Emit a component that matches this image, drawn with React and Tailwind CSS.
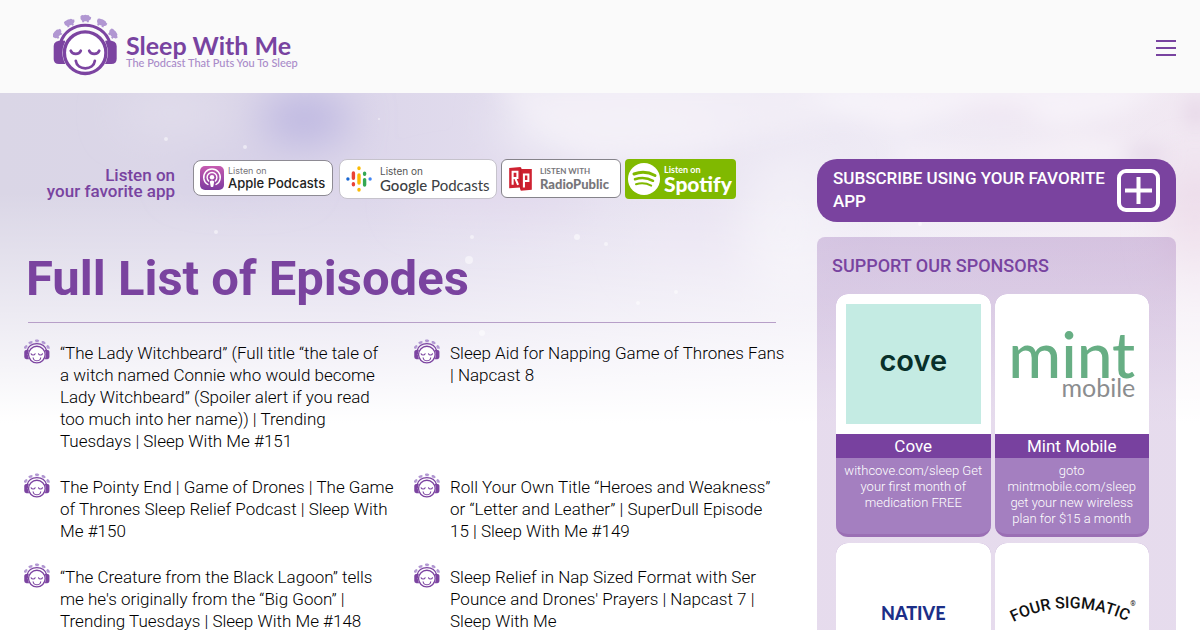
const episodes = [
  '“The Lady Witchbeard” (Full title “the tale of\na witch named Connie who would become\nLady Witchbeard” (Spoiler alert if you read\ntoo much into her name)) | Trending\nTuesdays | Sleep With Me #151',
  'Sleep Aid for Napping Game of Thrones Fans\n| Napcast 8',
  'The Pointy End | Game of Drones | The Game\nof Thrones Sleep Relief Podcast | Sleep With\nMe #150',
  'Roll Your Own Title “Heroes and Weakness”\nor “Letter and Leather” | SuperDull Episode\n15 | Sleep With Me #149',
  '“The Creature from the Black Lagoon” tells\nme he\'s originally from the “Big Goon” |\nTrending Tuesdays | Sleep With Me #148',
  'Sleep Relief in Nap Sized Format with Ser\nPounce and Drones\' Prayers | Napcast 7 |\nSleep With Me',
];

const sheep = [
  [53, 86, -50],
  [89, 53, -22],
  [137, 40, 0],
  [185, 53, 22],
  [219, 86, 50],
];

function SleepyFace({ className }) {
  return (
    <svg viewBox="40 27 194 184" className={className} aria-hidden="true">
      {sheep.map(([x, y, turn]) => (
        <g key={x} transform={`translate(${x} ${y}) rotate(${turn})`} fill="#b197d2">
          <path d="M-15 -7 Q-11 -11 -6 -10 Q0 -12 5 -10 Q10 -11 12 -6 L17 -4 Q17 3 12 5 L10 6 V11 H4 V8 H-4 V11 H-10 V7 Q-17 2 -15 -7Z" />
        </g>
      ))}
      <path d="M76 106 Q42 104 42 122 V160 Q42 176 58 176 H78Z" fill="#7c44a1" />
      <path d="M196 106 Q230 104 230 122 V160 Q230 176 214 176 H194Z" fill="#7c44a1" />
      <path d="M62 114 C82 42 190 42 210 114" fill="none" stroke="#7c44a1" strokeWidth="9" />
      <circle cx="136" cy="142" r="68" fill="#fafafa" />
      <circle cx="136" cy="142" r="62" fill="#fff" stroke="#7c44a1" strokeWidth="10" />
      <g fill="none" stroke="#7c44a1" strokeWidth="8" strokeLinecap="round">
        <path d="M93 136 C98 149 118 149 123 136" />
        <path d="M148 136 C153 149 173 149 178 136" />
        <path d="M108 166 C112 196 161 196 165 166" />
      </g>
    </svg>
  );
}

function Sky() {
  return (
    <svg
      viewBox="0 0 1200 330"
      preserveAspectRatio="none"
      className="absolute inset-x-0 top-0 -z-10 h-[330px] w-full"
      aria-hidden="true"
    >
      <defs>
        <linearGradient id="sky" x1="0" x2="1" y1="0" y2="0">
          <stop offset="0" stopColor="#dad6e6" />
          <stop offset="0.3" stopColor="#dcd6ea" />
          <stop offset="0.5" stopColor="#e6e1f0" />
          <stop offset="0.75" stopColor="#efebf5" />
          <stop offset="1" stopColor="#f1e8f2" />
        </linearGradient>
        <linearGradient id="fade" x1="0" x2="0" y1="0" y2="1">
          <stop offset="0.3" stopColor="#fff" stopOpacity="0" />
          <stop offset="0.7" stopColor="#fff" stopOpacity="0.55" />
          <stop offset="1" stopColor="#fff" />
        </linearGradient>
        <filter id="soft" x="-100%" y="-100%" width="300%" height="300%">
          <feGaussianBlur stdDeviation="22" />
        </filter>
        <filter id="puff" x="-50%" y="-100%" width="200%" height="300%">
          <feGaussianBlur stdDeviation="10" />
        </filter>
      </defs>
      <rect width="1200" height="330" fill="url(#sky)" />
      <g filter="url(#soft)">
        <ellipse cx="305" cy="26" rx="46" ry="24" fill="#b9b3e0" />
        <ellipse cx="240" cy="80" rx="60" ry="12" fill="#d3cde6" />
        <ellipse cx="170" cy="20" rx="50" ry="12" fill="#e6e2ef" />
        <ellipse cx="620" cy="30" rx="120" ry="40" fill="#f1eef7" />
        <ellipse cx="720" cy="150" rx="80" ry="40" fill="#e9e3f2" />
        <ellipse cx="500" cy="105" rx="90" ry="20" fill="#e2d9ed" />
        <ellipse cx="1195" cy="130" rx="24" ry="60" fill="#ecd9e8" />
        <ellipse cx="790" cy="130" rx="50" ry="70" fill="#f2eff7" />
      </g>
      <g filter="url(#puff)">
        <path d="M490 -10 H900 L860 20 L780 40 L690 60 L590 66 L540 34Z" fill="#f5f2f9" fillOpacity="0.6" />
        <path d="M800 -10 L840 22 L900 36 L980 10 L1060 34 L1120 20 L1170 -10Z" fill="#f7f4fa" fillOpacity="0.8" />
        <path d="M950 18 L1000 10 L1050 16 L1000 24Z" fill="#efe5f2" />
        <path d="M900 54 L1000 60 L1080 44 L1160 56 L1150 70 L900 72Z" fill="#f8f4fa" fillOpacity="0.7" />
        <ellipse cx="1145" cy="62" rx="22" ry="6" fill="#dfcfe3" />
        <ellipse cx="1196" cy="20" rx="9" ry="14" fill="#e3d2e4" />
      </g>
      <rect width="1200" height="330" fill="url(#fade)" />
      <g fill="#fff" fillOpacity="0.5">
        <circle cx="166" cy="46" r="2" />
        <circle cx="245" cy="54" r="2" />
        <circle cx="216" cy="139" r="2" />
        <circle cx="379" cy="26" r="1" />
        <circle cx="472" cy="144" r="2" />
        <circle cx="577" cy="144" r="3" />
        <circle cx="606" cy="151" r="2" />
        <circle cx="469" cy="167" r="4" />
        <circle cx="676" cy="199" r="2" />
        <circle cx="638" cy="210" r="2" />
        <circle cx="482" cy="240" r="3" />
        <circle cx="920" cy="131" r="2" />
      </g>
    </svg>
  );
}

function Header() {
  return (
    <header className="flex h-[93px] items-center justify-between bg-[#fafafa] px-6">
      <a href="/" className="mb-1 ml-[29px] flex items-center gap-2">
        <SleepyFace className="h-[62px] w-[65px]" />
        <span className="flex flex-col pt-3 font-[Lato,sans-serif]">
          <span className="text-[25px] leading-6 font-bold text-[#7843a0]">Sleep With Me</span>
          <span className="text-[11px] leading-3 font-medium text-[#a98bc9]">The Podcast That Puts You To Sleep</span>
        </span>
      </a>
      <button type="button" aria-label="Menu" className="flex flex-col gap-[5px] pt-[3px]">
        <span className="h-0.5 w-5 bg-[#7843a0]" />
        <span className="h-0.5 w-5 bg-[#7843a0]" />
        <span className="h-0.5 w-5 bg-[#7843a0]" />
      </button>
    </header>
  );
}

function ListenLinks() {
  return (
    <div className="flex items-start">
      <p className="mr-[18px] w-[151px] pt-2 text-right text-[17px] leading-4 font-medium text-[#7843a0]">
        Listen on
        <br />
        your favorite app
      </p>
      <a href="#apple" className="mt-px mr-1.5 flex h-9 w-[140px] items-center gap-1 rounded-lg border border-[#8e8b94] bg-white pl-1.5">
        <svg viewBox="0 0 24 24" className="size-6 shrink-0" aria-hidden="true">
          <defs>
            <linearGradient id="pod" x1="0" x2="0" y1="0" y2="1">
              <stop offset="0" stopColor="#c65bb0" />
              <stop offset="1" stopColor="#7d3b9f" />
            </linearGradient>
          </defs>
          <rect width="24" height="24" rx="5" fill="url(#pod)" />
          <g fill="none" stroke="#fff" strokeWidth="1.4" strokeLinecap="round">
            <path d="M8 18.5 A8.3 8.3 0 1 1 16 18.5" />
            <path d="M8.6 15 A4.9 4.9 0 1 1 15.4 15" />
          </g>
          <circle cx="12" cy="11.3" r="2.2" fill="#fff" />
          <path d="M9.8 15.5 Q12 13.6 14.2 15.5 L13.3 20.5 Q12 21.6 10.7 20.5Z" fill="#fff" />
        </svg>
        <span className="flex flex-col whitespace-nowrap font-[Inter,sans-serif]">
          <span className="text-[9px] leading-[11px] text-[#77757a]">Listen on</span>
          <span className="text-[13px] leading-[15px] font-medium text-[#222]">Apple Podcasts</span>
        </span>
      </a>
      <a href="#google" className="mr-1 flex h-10 w-[158px] items-center gap-2 rounded-lg border border-[#c6c3cc] bg-white pl-1.5">
        <svg viewBox="0 0 26 26" className="size-[26px] shrink-0" fill="none" strokeWidth="3.4" strokeLinecap="round" aria-hidden="true">
          <path d="M1.9 13v.1" stroke="#1967d2" />
          <path d="M24.1 13v.1" stroke="#4285f4" />
          <path d="M7.4 7v5.2M7.4 17.8v1" stroke="#ea4335" />
          <path d="M13 2v.6M13 9v8M13 23.4v.6" stroke="#fbbc04" />
          <path d="M18.6 7.2v1M18.6 13.6v5.4" stroke="#34a853" />
        </svg>
        <span className="flex flex-col whitespace-nowrap">
          <span className="font-[Inter,sans-serif] text-[10px] leading-3 text-[#555]">Listen on</span>
          <span className="font-[Lato,sans-serif] text-[15px] leading-4 text-[#3c4043]">
            <span className="font-medium">Google</span> Podcasts
          </span>
        </span>
      </a>
      <a href="#radiopublic" className="mr-1 flex h-[39px] w-[120px] items-center gap-2 rounded-md border border-[#85838a] bg-white pl-[7px]">
        <svg viewBox="0 0 66 70" className="h-6 w-[23px] shrink-0" aria-hidden="true">
          <path d="M0 3 L33 0 L36 6 L66 6 V66 L34 69 L31 60 L0 62Z" fill="#cf2231" />
          <path d="M34 2 V66" stroke="#a81824" strokeWidth="2" />
          <path d="M10 52 V14 H24 V32 H12 M18 33 L26 52" fill="none" stroke="#fff" strokeWidth="6" />
          <path d="M43 60 V22 H56 V41 H45" fill="none" stroke="#fff" strokeWidth="6" />
        </svg>
        <span className="flex flex-col whitespace-nowrap font-[Lato,sans-serif] font-bold text-[#77767a]">
          <span className="text-[8px] leading-[10px]">LISTEN WITH</span>
          <span className="text-[13px] leading-4 font-black">RadioPublic</span>
        </span>
      </a>
      <a href="#spotify" className="flex h-10 w-[111px] items-center gap-1 rounded bg-[#80b900] pl-[3px] text-white">
        <svg viewBox="0 0 32 32" className="size-8 shrink-0" aria-hidden="true">
          <circle cx="16" cy="16" r="16" fill="#fff" />
          <g fill="none" stroke="#80b900" strokeLinecap="round">
            <path d="M6 11 Q17 7 27 12.5" strokeWidth="3" />
            <path d="M7 16.3 Q16.5 13.2 25 17.8" strokeWidth="2.5" />
            <path d="M8 21.2 Q16 18.8 23.2 22.6" strokeWidth="2" />
          </g>
        </svg>
        <span className="flex flex-col whitespace-nowrap font-[Lato,sans-serif] font-bold">
          <span className="text-[9px] leading-[9px]">Listen on</span>
          <span className="text-[21px] leading-5 font-black">Spotify</span>
        </span>
      </a>
    </div>
  );
}

function Sponsor({ name, text, children }) {
  return (
    <a href="#sponsor" className="flex flex-col overflow-hidden rounded-xl border-b-3 border-[#9a6fb4] bg-[#a47fc0] text-center text-white">
      <div className="flex h-[140px] flex-col items-center justify-center bg-white p-2.5">{children}</div>
      <h3 className="bg-[#78419f] text-[17px] leading-6">{name}</h3>
      <p className="min-h-[76px] px-1 pt-[5px] pb-1.5 text-[13px] leading-4 font-light">{text}</p>
    </a>
  );
}

function Sidebar() {
  return (
    <aside className="w-[359px] shrink-0">
      <button type="button" className="flex w-full items-center justify-between rounded-[20px] bg-[#7a439f] px-4 pt-2 pb-[9px] text-left text-white">
        <span className="text-[17px] leading-[23px] font-medium">SUBSCRIBE USING YOUR FAVORITE APP</span>
        <svg viewBox="0 0 43 43" className="size-[43px] shrink-0" fill="none" stroke="#fff" strokeWidth="4" aria-hidden="true">
          <rect x="2" y="2" width="39" height="39" rx="7" />
          <path d="M21.5 8v27M8 21.5h27" />
        </svg>
      </button>
      <section className="mt-[15px] rounded-lg bg-linear-to-b from-[#7c44a1]/25 to-[#7c44a1]/19 to-[160px] px-[15px] pt-[17px] pb-4">
        <h2 className="text-lg leading-6 font-medium text-[#7843a0]">SUPPORT OUR SPONSORS</h2>
        <div className="mt-4 mr-3 ml-1 grid grid-cols-2 gap-x-1 gap-y-1.5">
          <Sponsor name="Cove" text="withcove.com/sleep Get your first month of medication FREE">
            <div className="flex h-full w-full items-center justify-center bg-[#c4ebe3] pb-1.5 font-[Inter,sans-serif] text-[29px] font-semibold text-[#08302a]">
              cove
            </div>
          </Sponsor>
          <Sponsor name="Mint Mobile" text="goto mintmobile.com/sleep get your new wireless plan for $15 a month">
            <div className="flex flex-col items-end font-[Lato,sans-serif]">
              <span className="text-[64px] leading-[46px] font-medium text-[#67ae84]">mint</span>
              <span className="text-[25px] leading-5 text-[#8b8d8f]">mobile</span>
            </div>
          </Sponsor>
          <Sponsor name="Native" text="">
            <span className="font-[Lato,sans-serif] text-lg font-black text-[#1c2f88]">NATIVE</span>
          </Sponsor>
          <Sponsor name="Four Sigmatic" text="">
            <svg viewBox="0 0 134 60" className="h-[60px] w-full" role="img" aria-label="Four Sigmatic">
              <path id="arch" d="M8 39 Q64 11 124 39" fill="none" />
              <text className="font-[Roboto,sans-serif] text-[16px] font-medium" fill="#111">
                <textPath href="#arch">FOUR SIGMATIC</textPath>
              </text>
              <text x="125" y="23" className="font-[Roboto,sans-serif] text-[7px]" fill="#111">®</text>
            </svg>
          </Sponsor>
        </div>
      </section>
    </aside>
  );
}

export default function App() {
  return (
    <div className="h-screen overflow-hidden bg-white font-[Roboto,sans-serif]">
      <Header />
      <main className="relative isolate flex gap-[41px] px-6 pt-[66px]">
        <Sky />
        <div className="min-w-0 flex-1">
          <ListenLinks />
          <h1 className="mt-[52px] ml-0.5 text-[49px] leading-[56px] font-bold text-[#7a439f]">Full List of Episodes</h1>
          <hr className="mt-[15px] ml-1 border-[#b79fc8]" />
          <ul className="mt-4 grid grid-cols-2 gap-x-7 gap-y-[21px]">
            {episodes.map((title) => (
              <li key={title} className="flex items-start gap-2.5">
                <SleepyFace className="h-[25px] w-[26px] shrink-0" />
                <a href="#episode" className="-mr-5 pt-[3px] text-[17px] leading-[22px] font-light whitespace-pre-line text-black">
                  {title}
                </a>
              </li>
            ))}
          </ul>
        </div>
        <Sidebar />
      </main>
    </div>
  );
}
